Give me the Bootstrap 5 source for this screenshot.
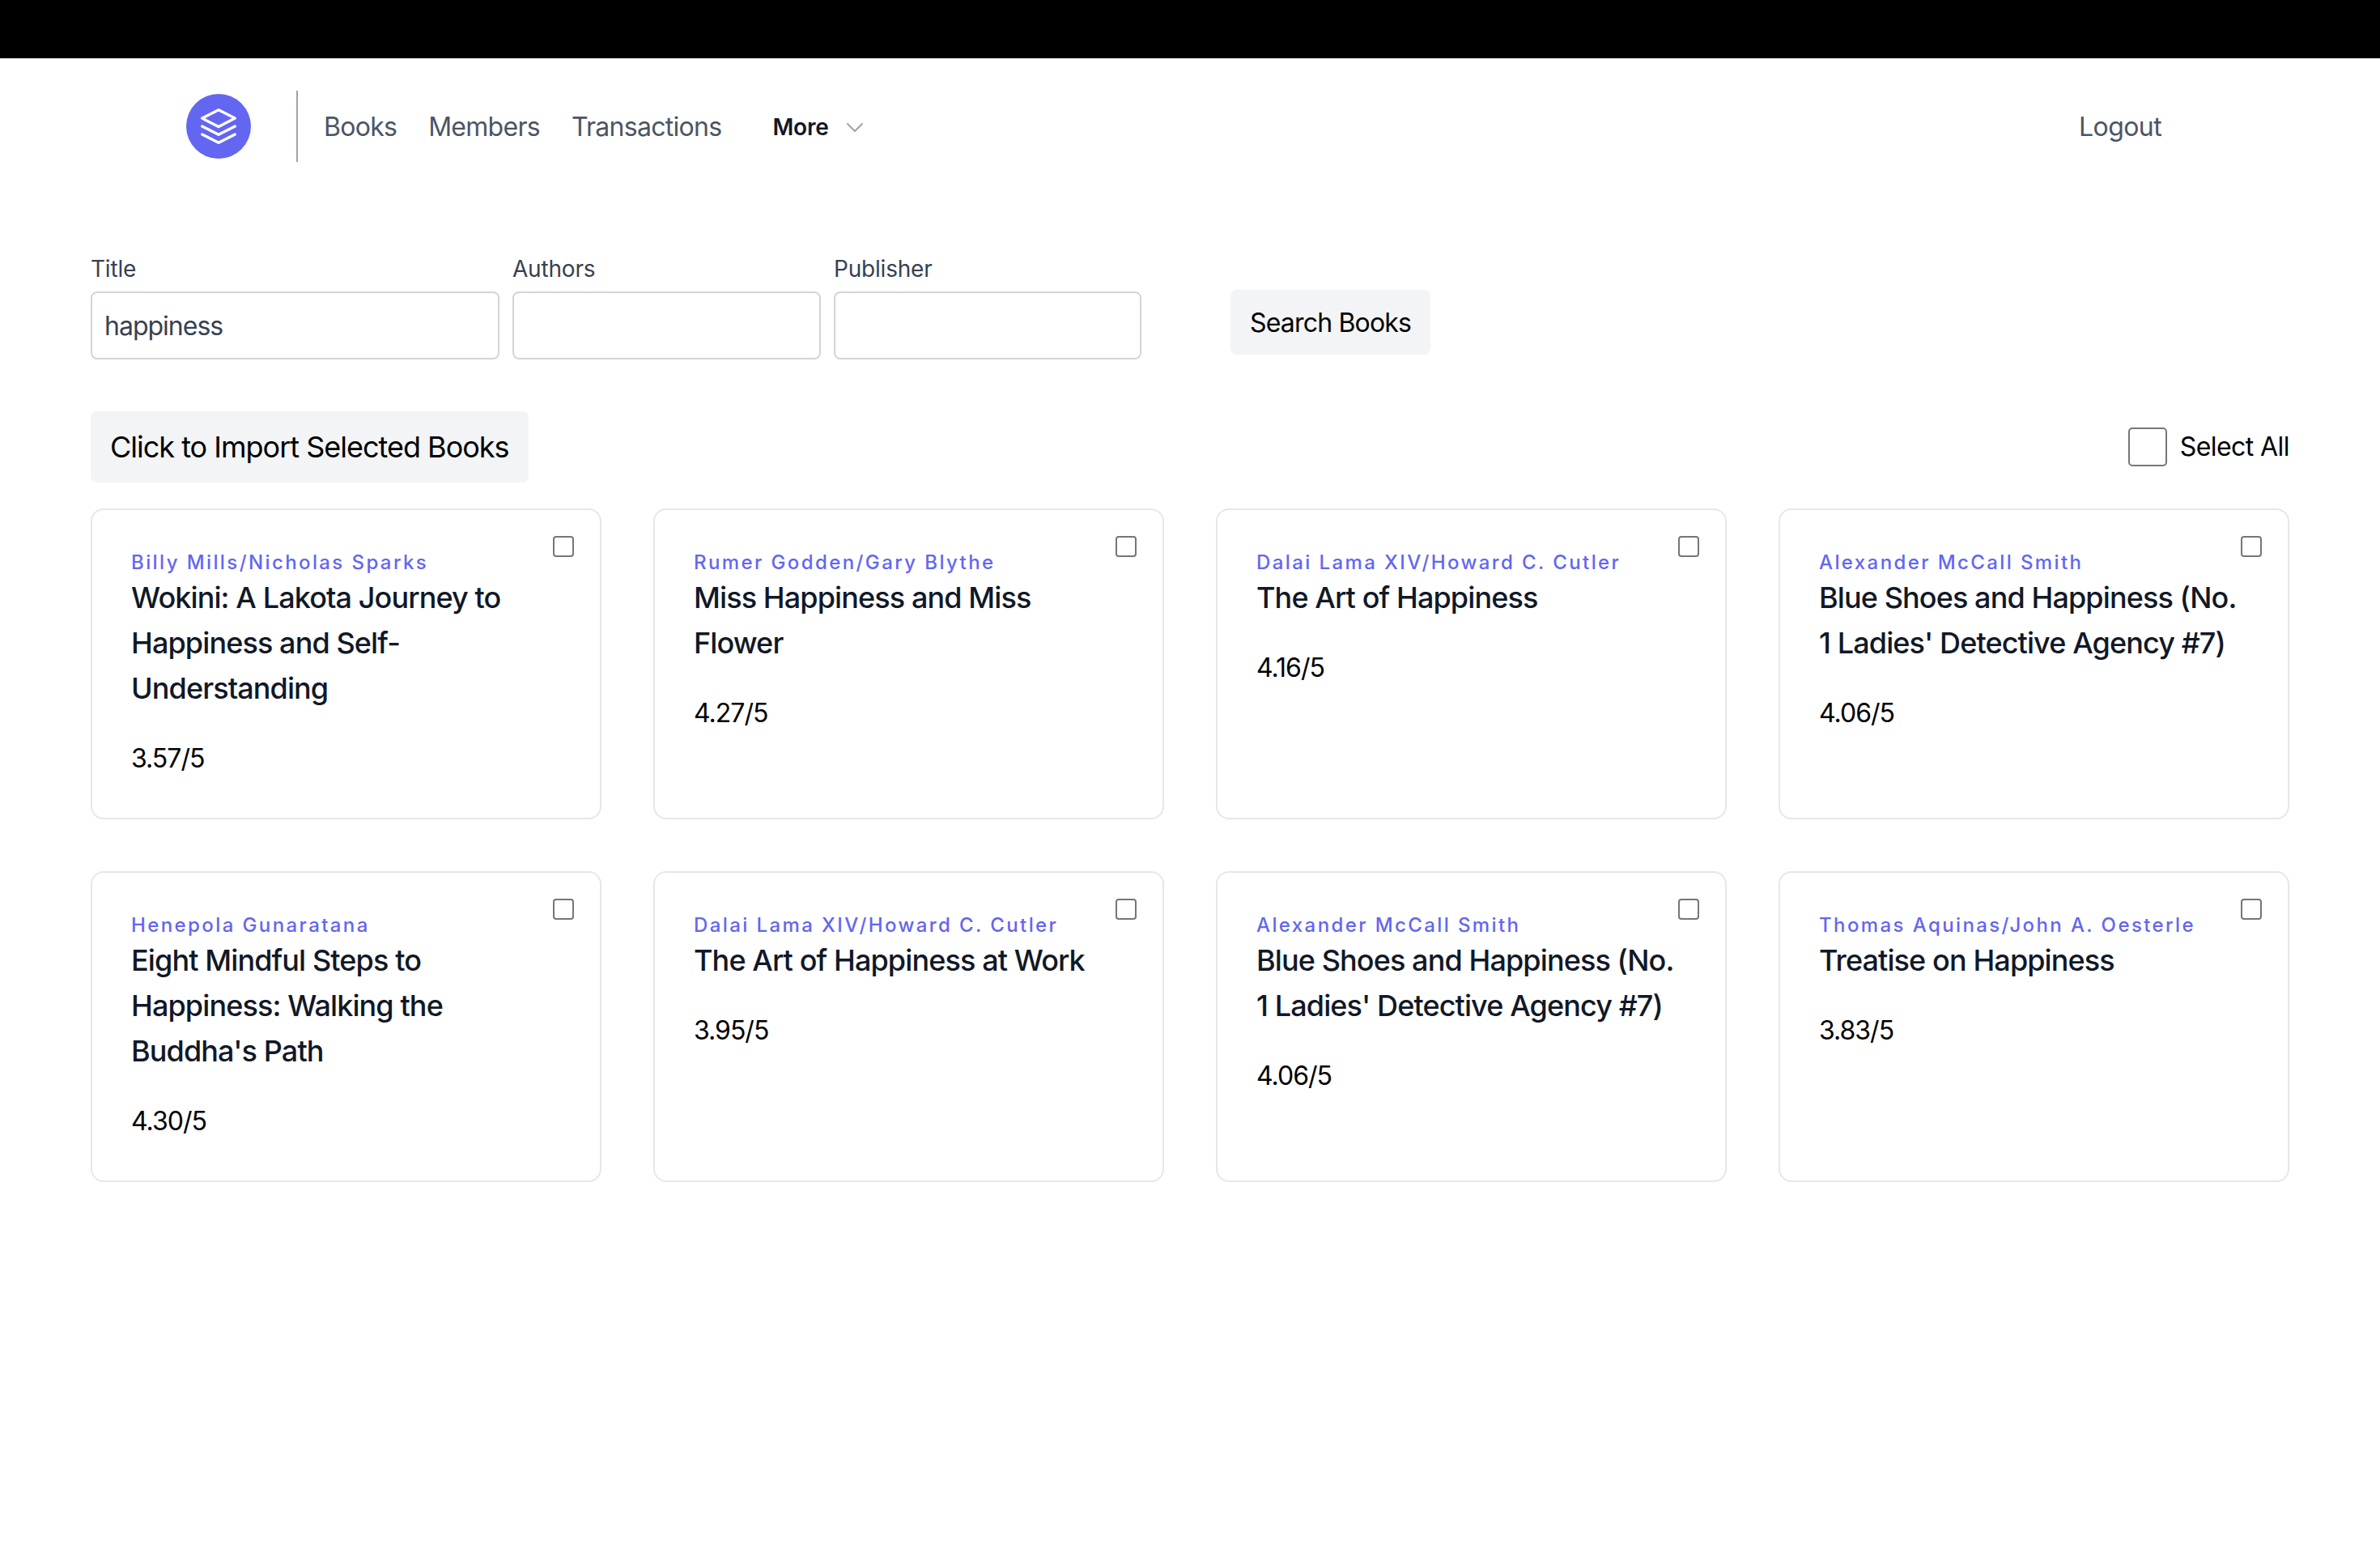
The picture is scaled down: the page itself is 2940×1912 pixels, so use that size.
<!DOCTYPE html>
<html lang="en">
<head>
  <meta charset="UTF-8" />
  <meta name="viewport" content="width=device-width, initial-scale=1.0"/>
  <title>Library</title>
  <link href="https://cdn.jsdelivr.net/npm/bootstrap@5.3.2/dist/css/bootstrap.min.css" rel="stylesheet" />
  <style>
    body {
      font-family: Inter, "Liberation Sans", sans-serif;
      font-size: 32px;
      color: #000;
      background: #fff;
    }
    .top-strip { height: 72px; background: #000; }
    .main-nav { height: 170px; padding: 0 112px 0 230px; }
    .logo-dot { width: 80px; height: 80px; background: #6366f1; margin-bottom: 2px; }
    .nav-sep { width: 2px; height: 88px; background: #9ca3af; margin: 0 32px 2px 56px; }
    .nav-item-link { color: #4b5563; text-decoration: none; margin-right: 39px; letter-spacing: -0.72px; }
    .more-link { color: #111827; font-size: 28px; font-weight: 600; margin-left: 24px; text-decoration: none; letter-spacing: -0.2px; }
    .more-chevron { margin-left: 20px; }
    .logout-link { color: #4b5563; text-decoration: none; margin-right: 158px; letter-spacing: -0.6px; }
    .page-body { padding: 70px 112px 0; }
    .search-label { font-size: 28px; color: #374151; margin-bottom: 8px; line-height: 40px; letter-spacing: -0.2px; }
    .search-input.form-control {
      height: 84px; font-size: 32px; color: #374151; padding: 0 15px; letter-spacing: -1px;
      border: 2px solid #d1d5db; border-radius: 8px;
    }
    .field-title { width: 505px; }
    .field-other { width: 381px; }
    .field-last { width: 380px; }
    .grey-btn.btn {
      background: #f3f4f6; border: 0; border-radius: 8px; color: #000;
    }
    .search-btn.btn { font-size: 32px; height: 80px; padding: 2px 24px 0; margin-left: 110px; margin-bottom: 6px; letter-spacing: -0.82px; }
    .import-btn.btn { font-size: 36px; height: 88px; padding: 0 24px; letter-spacing: -1px; }
    .action-row { margin-top: 64px; margin-bottom: 32px; }
    .select-all-box.form-check-input {
      width: 48px; height: 48px; margin: 0 16px 0 0; border: 2px solid #767676; border-radius: 5px;
    }
    .select-all-text { letter-spacing: -0.56px; }
    .book-grid { display: grid; grid-template-columns: repeat(4, 1fr); gap: 64px; }
    .book-card.card {
      height: 384px; padding: 48px; border: 2px solid #e5e7eb; border-radius: 16px;
    }
    .book-check.form-check-input {
      position: absolute; top: 32px; right: 32px; width: 26px; height: 26px; margin: 0;
      border: 2px solid #767676; border-radius: 4px;
    }
    .book-author { font-size: 24px; line-height: 32px; letter-spacing: 2.4px; color: #6366f1; font-weight: 500; padding-top: 1px; margin-bottom: -1px; }
    .book-name { font-size: 36px; line-height: 56px; color: #111827; font-weight: 500; margin: 0; letter-spacing: -0.89px; }
    .book-rating { font-size: 32px; line-height: 56px; color: #000; margin-top: 31px; letter-spacing: -1px; }
  </style>
</head>
<body>

  <div class="top-strip"></div>

  <nav class="main-nav d-flex align-items-center">
    <div class="logo-dot rounded-circle d-flex align-items-center justify-content-center">
      <svg width="54" height="54" viewBox="0 0 24 24" fill="none" stroke="#fff" stroke-width="1.5" stroke-linecap="round" stroke-linejoin="round">
        <path d="M12 3 3 7.6l9 4.6 9-4.6z"/>
        <path d="M3 12l9 4.6 9-4.6"/>
        <path d="M3 16.4 12 21l9-4.6"/>
      </svg>
    </div>
    <div class="nav-sep"></div>
    <a class="nav-item-link" href="#">Books</a>
    <a class="nav-item-link" href="#">Members</a>
    <a class="nav-item-link" href="#">Transactions</a>
    <a class="more-link d-flex align-items-center" href="#">More
      <svg class="more-chevron" width="24" height="24" viewBox="0 0 24 24" fill="none" stroke="#9ca3af" stroke-width="2" stroke-linecap="round" stroke-linejoin="round"><path d="M3 8l9 9 9-9"/></svg>
    </a>
    <a class="logout-link ms-auto" href="#">Logout</a>
  </nav>

  <main class="page-body">
    <form class="d-flex align-items-end">
      <div class="field-title me-3">
        <label class="search-label d-block">Title</label>
        <input class="search-input form-control" type="text" value="happiness">
      </div>
      <div class="field-other me-3">
        <label class="search-label d-block">Authors</label>
        <input class="search-input form-control" type="text">
      </div>
      <div class="field-last">
        <label class="search-label d-block">Publisher</label>
        <input class="search-input form-control" type="text">
      </div>
      <button type="button" class="grey-btn search-btn btn d-flex align-items-center">Search Books</button>
    </form>

    <div class="action-row d-flex align-items-center justify-content-between">
      <button type="button" class="grey-btn import-btn btn d-flex align-items-center">Click to Import Selected Books</button>
      <div class="d-flex align-items-center">
        <input class="select-all-box form-check-input" type="checkbox">
        <span class="select-all-text">Select All</span>
      </div>
    </div>

    <div class="book-grid" id="books"></div>
  </main>

  <script>
    const books = [
      ["Billy Mills/Nicholas Sparks", "Wokini: A Lakota Journey to Happiness and Self-Understanding", "3.57/5"],
      ["Rumer Godden/Gary Blythe", "Miss Happiness and Miss Flower", "4.27/5"],
      ["Dalai Lama XIV/Howard C. Cutler", "The Art of Happiness", "4.16/5"],
      ["Alexander McCall Smith", "Blue Shoes and Happiness (No. 1 Ladies' Detective Agency #7)", "4.06/5"],
      ["Henepola Gunaratana", "Eight Mindful Steps to Happiness: Walking the Buddha's Path", "4.30/5"],
      ["Dalai Lama XIV/Howard C. Cutler", "The Art of Happiness at Work", "3.95/5"],
      ["Alexander McCall Smith", "Blue Shoes and Happiness (No. 1 Ladies' Detective Agency #7)", "4.06/5"],
      ["Thomas Aquinas/John A. Oesterle", "Treatise on Happiness", "3.83/5"]
    ];

    const grid = document.getElementById("books");
    books.forEach(b => {
      const card = document.createElement("div");
      card.className = "book-card card";
      card.innerHTML = `
        <input class="book-check form-check-input" type="checkbox">
        <div class="book-author">${b[0]}</div>
        <h3 class="book-name">${b[1]}</h3>
        <div class="book-rating">${b[2]}</div>
      `;
      grid.appendChild(card);
    });
  </script>
  <script src="https://cdn.jsdelivr.net/npm/bootstrap@5.3.2/dist/js/bootstrap.bundle.min.js"></script>
</body>
</html>
